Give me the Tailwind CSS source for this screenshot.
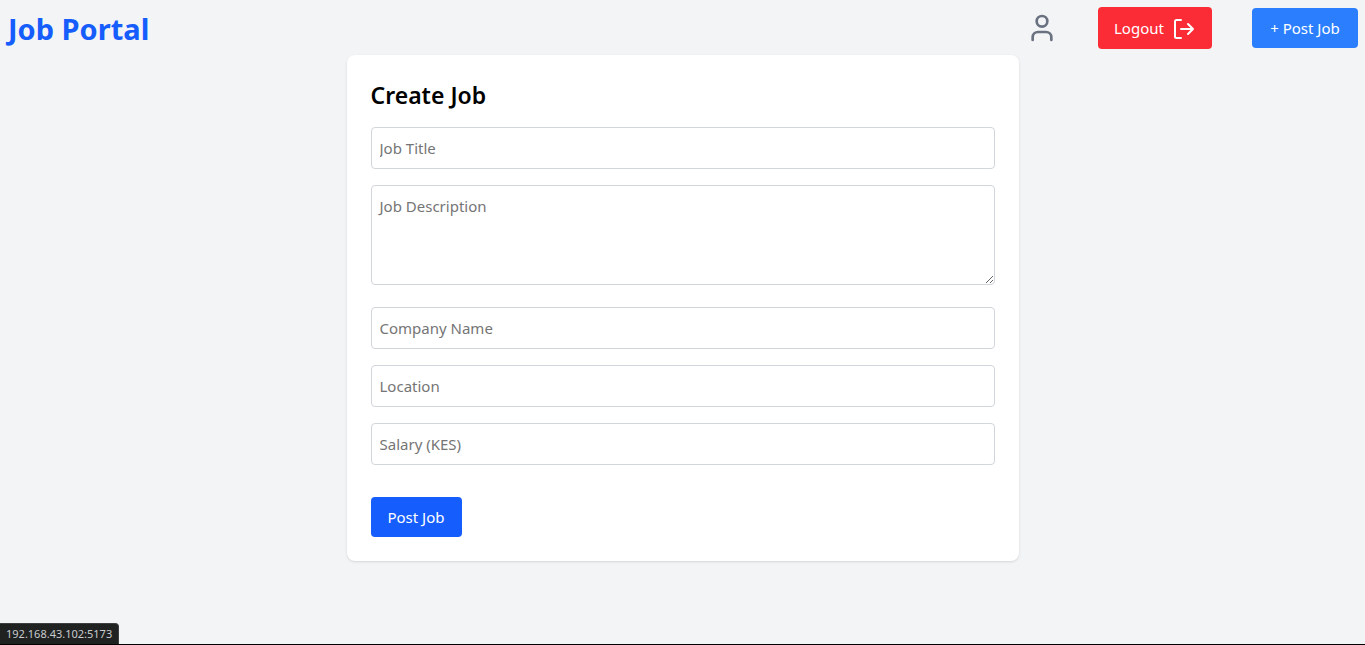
<!DOCTYPE html>
<html lang="en">
<head>
<meta charset="utf-8">
<meta name="viewport" content="width=device-width, initial-scale=1">
<title>Job Portal</title>
<script src="https://cdn.jsdelivr.net/npm/@tailwindcss/browser@4"></script>
</head>
<body class="min-h-screen bg-gray-100 font-['Segoe_UI','Noto_Sans',sans-serif] text-[15px] leading-6 text-black">
<header class="flex h-[55px] items-center justify-between pr-[7px] pl-2">
  <a href="#" class="pt-0.5 text-[29px] leading-9 font-bold text-blue-600">Job Portal</a>
  <nav class="flex items-center gap-10">
    <a href="#" aria-label="Profile" class="text-gray-500">
      <svg class="size-8" viewBox="0 0 24 24" fill="none" stroke="currentColor" stroke-width="2" stroke-linecap="round" stroke-linejoin="round"><circle cx="12" cy="7" r="4"/><path d="M19 21v-2a4 4 0 0 0-4-4H9a4 4 0 0 0-4 4v2"/></svg>
    </a>
    <button type="button" class="flex h-[42px] w-[114px] items-center justify-between rounded bg-[#fb2c36] px-4 text-white">
      <span>Logout</span>
      <svg class="size-6" viewBox="0 0 24 24" fill="none" stroke="currentColor" stroke-width="2" stroke-linecap="round" stroke-linejoin="round"><path d="M9 4H4.500a1.500 1.500 0 0 0-1.500 1.500v15a1.500 1.500 0 0 0 1.500 1.500h4.500"/><path d="M9 13h12M16 8l5 5-5 5"/></svg>
    </button>
    <a href="#" class="flex h-10 w-[106px] items-center justify-center rounded bg-[#2b7fff] whitespace-nowrap text-white">+ Post Job</a>
  </nav>
</header>
<main>
  <form class="mx-auto max-w-2xl rounded-lg bg-white p-6 shadow-sm">
    <h2 class="mb-4 text-[23px] leading-8 font-semibold">Create Job</h2>
    <input type="text" aria-label="Job Title" placeholder="Job Title" class="mb-4 block w-full rounded border border-gray-300 p-2 placeholder:text-[#757575]">
    <textarea aria-label="Job Description" placeholder="Job Description" class="mb-[22px] block h-[100px] w-full resize-y rounded border border-gray-300 p-2 placeholder:text-[#757575]"></textarea>
    <input type="text" aria-label="Company Name" placeholder="Company Name" class="mb-4 block w-full rounded border border-gray-300 p-2 placeholder:text-[#757575]">
    <input type="text" aria-label="Location" placeholder="Location" class="mb-4 block w-full rounded border border-gray-300 p-2 placeholder:text-[#757575]">
    <input type="text" aria-label="Salary (KES)" placeholder="Salary (KES)" class="mb-8 block w-full rounded border border-gray-300 p-2 placeholder:text-[#757575]">
    <button type="submit" class="flex h-10 w-[91px] items-center justify-center rounded bg-blue-600 text-white">Post Job</button>
  </form>
</main>
<div class="fixed inset-x-0 bottom-0 border-b border-black">
  <div class="w-fit rounded-tr border-t border-r border-[#3c3f3f] bg-[#202222] px-[6px] text-[11px] leading-5 text-[#c8cbcd]">192.168.43.102:5173</div>
</div>
</body>
</html>
